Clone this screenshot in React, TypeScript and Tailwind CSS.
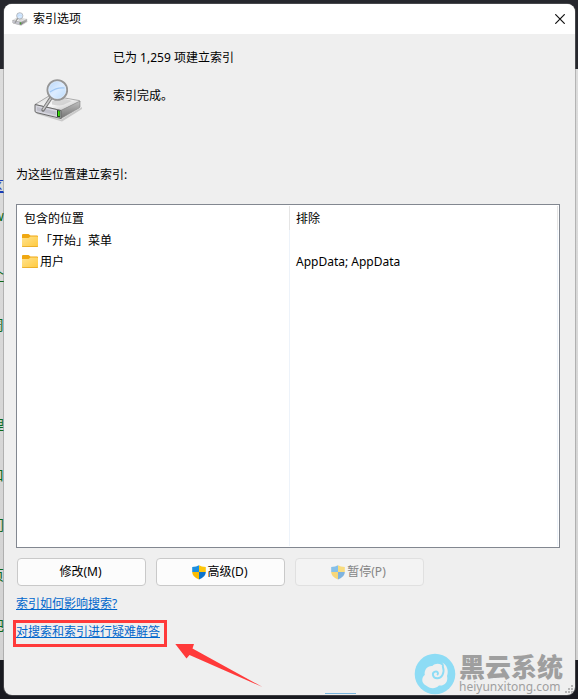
import { clsx } from "clsx";
import type { ReactNode } from "react";

type IndexedLocation = {
  name: string;
  excluded: string;
};

const locations: IndexedLocation[] = [
  { name: "「开始」菜单", excluded: "" },
  { name: "用户", excluded: "AppData; AppData" },
];

// slivers of the document window that sits behind the dialog
const backgroundText = [
  { text: "区", className: "top-[178px] text-blue-800 underline" },
  { text: "w", className: "top-[208px] text-[#0b6b1c]" },
  { text: "个", className: "top-[267px] text-[#0b6b1c] underline" },
  { text: "周", className: "top-[317px] text-[#0b6b1c]" },
  { text: "理", className: "top-[417px] text-[#0b6b1c]" },
  { text: "口", className: "top-[467px] text-[#0b6b1c]" },
  { text: "们", className: "top-[517px] text-[#0b6b1c]" },
  { text: "页", className: "top-[567px] text-[#0b6b1c]" },
  { text: "把", className: "top-[618px] text-[#0b6b1c]" },
];

function DriveSearchIcon({ className }: { className?: string }) {
  return (
    <svg viewBox="8 8 50 44" className={className} aria-hidden="true">
      <defs>
        <linearGradient id="driveTop" x1="0" y1="0" x2="1" y2="1">
          <stop offset="0" stopColor="#d4d4d4" />
          <stop offset="0.5" stopColor="#f8f8f8" />
          <stop offset="1" stopColor="#b5b5b5" />
        </linearGradient>
        <linearGradient id="driveSide" x1="0" y1="0" x2="0" y2="1">
          <stop offset="0" stopColor="#c2c2c2" />
          <stop offset="1" stopColor="#727272" />
        </linearGradient>
        <linearGradient id="lens" x1="0" y1="0" x2="1" y2="1">
          <stop offset="0" stopColor="#b4d4f8" />
          <stop offset="0.5" stopColor="#dcecff" />
          <stop offset="1" stopColor="#b9dbfb" />
        </linearGradient>
      </defs>
      <path d="M11 42 36 49.500 57 37v2L37 51.500 12 44z" fill="#c9c9c9" />
      <path d="M10 34.500 23 26.500q2-1 4-.7l27 4.700q2 .6 0 1.800L36 40.500z" fill="url(#driveTop)" stroke="#8c8c8c" strokeWidth="0.7" />
      <path d="M27 31.500q9-5 20-.5l-9 4q-4 1-11-.5z" fill="#c8c8c8" opacity="0.700" />
      <path d="M36 40.500 55 31v5.500q0 1-1 1.600L36 48.500z" fill="url(#driveSide)" stroke="#838383" strokeWidth="0.6" />
      <path d="m10 34.500 26 6v8L11 42.500q-1-.5-1-1.500z" fill="#d6d6de" stroke="#686868" strokeWidth="1" />
      <path d="m12 37 19 4.500v3.700L12 40.500z" fill="#c0c0cb" />
      <path d="m32 40 3.200.7v6.800l-3.200-.7z" fill="#173c17" />
      <path d="m33 41 1.700.3v5l-1.700-.3z" fill="#3ee40d" />
      <path d="m26.500 27-8.500 13" stroke="#777" strokeWidth="3.400" strokeLinecap="round" />
      <path d="m26.300 27.500-8.200 12" stroke="#c9c9c9" strokeWidth="1.500" strokeLinecap="round" />
      <circle cx="32.300" cy="20" r="9.800" fill="url(#lens)" stroke="#969696" strokeWidth="2" />
      <circle cx="32.300" cy="20" r="8.600" fill="none" stroke="#e7f2ff" strokeWidth="0.6" />
      <path d="M25 22q7-5 14.500-4" fill="none" stroke="#9fc7f4" strokeWidth="1.200" />
    </svg>
  );
}

function FolderIcon() {
  return (
    <svg viewBox="0 0 16 14" className="h-[14px] w-4 shrink-0" aria-hidden="true">
      <defs>
        <linearGradient id="folder" x1="0" y1="0" x2="1" y2="1">
          <stop offset="0" stopColor="#ffe38f" />
          <stop offset="1" stopColor="#ffc93c" />
        </linearGradient>
      </defs>
      <path d="M0 1Q0 0 1 0h5.500L8.500 1.500H15q1 0 1 1v6H0z" fill="#f0a811" />
      <path d="M0 4h6.500l2-1.500H15q1 0 1 1V12q0 1-1 1H1q-1 0-1-1z" fill="url(#folder)" />
      <path d="M0 11.800Q0 13 1 13h14q1 0 1-1.200l-1 .4H1z" fill="#e5a51f" />
    </svg>
  );
}

function ShieldIcon({ disabled }: { disabled?: boolean }) {
  return (
    <svg
      viewBox="0 0 14 15"
      className={clsx("h-[15px] w-[14px]", disabled && "opacity-50")}
      aria-hidden="true"
    >
      <path d="M7 .3Q4.500 2 .2 2v5H7z" fill="#1c8fe0" />
      <path d="M7 .3Q9.500 2 13.800 2v5H7z" fill="#fdc60c" />
      <path d="M.2 7Q.2 12 7 14.500V7z" fill="#fbbc04" />
      <path d="M13.800 7q0 5-6.800 7.500V7z" fill="#0d74cc" />
    </svg>
  );
}

function DialogButton(props: {
  children: ReactNode;
  shield?: boolean;
  disabled?: boolean;
}) {
  return (
    <button
      type="button"
      disabled={props.disabled}
      className={clsx(
        "flex h-7 w-[129px] items-center justify-center gap-0.5 rounded border pr-0.5",
        props.disabled
          ? "border-[#e0e0e0] bg-[#f3f3f3] text-[#858585]"
          : "border-[#c9c9c9] bg-[#fcfcfc]",
      )}
    >
      {props.shield ? <ShieldIcon disabled={props.disabled} /> : null}
      {props.children}
    </button>
  );
}

function LocationTable() {
  return (
    <div className="mr-[15px] ml-3 min-h-0 flex-1 border border-[#828790] bg-white p-px">
      <table className="h-full w-full table-fixed border-separate border-spacing-0 text-left">
        <thead>
          <tr className="h-6">
            <th className="w-[272px] border-r border-[#e5e5e5] p-0 pt-0.5 pl-1.5 font-normal">
              包含的位置
            </th>
            <th className="border-r border-[#e5e5e5] p-0 pt-0.5 pl-1.5 font-normal">
              排除
            </th>
          </tr>
        </thead>
        <tbody>
          {locations.map((location) => (
            <tr key={location.name} className="h-[21px]">
              <td className="border-r border-[#edf3fa] p-0 pl-1">
                <span className="flex items-center gap-0.5">
                  <FolderIcon />
                  {location.name}
                </span>
              </td>
              <td className="border-r border-[#edf3fa] p-0 pl-1.5">
                {location.excluded}
              </td>
            </tr>
          ))}
          {/* keeps the column lines running to the bottom */}
          <tr aria-hidden="true">
            <td className="border-r border-[#edf3fa] p-0" />
            <td className="border-r border-[#edf3fa] p-0" />
          </tr>
        </tbody>
      </table>
    </div>
  );
}

function Watermark() {
  return (
    <div className="pointer-events-none absolute right-3 bottom-0 flex items-center gap-[3px] text-[#9f9f9f]">
      <svg viewBox="0 0 42 42" className="size-[42px]" aria-hidden="true">
        <circle cx="21" cy="21" r="20.300" fill="#8ddcf5" />
        <path
          d="M12 32.500c-4.500-2-5-8-1.200-10.500-1-5.500 3-9.500 7.500-9 3-3.300 9.200-3 10.700 1 1.500-1 1-3-1-4.500 5 2 7 8.500 5 13.500 1.500 6-2.500 10.300-8 9.500-4 4-9.500 3-13 0z"
          fill="#efefef"
        />
        <path
          d="M28.800 13.500c2.200 6-.8 12-5.800 11.800-4.500-.3-5.500-5.500-2-6.600 2.200-.6 3.800 1 2.600 2.800"
          fill="none"
          stroke="#8ddcf5"
          strokeWidth="1.900"
          strokeLinecap="round"
        />
      </svg>
      <div>
        <p className="text-[26px] leading-[26px] font-black">黑云系统</p>
        <p className="text-xs leading-[14px]">heiyunxitong.com</p>
      </div>
    </div>
  );
}

export default function App() {
  return (
    <div className="relative flex h-screen min-h-[480px] flex-col overflow-hidden bg-[linear-gradient(to_bottom,#26272d_69px,#dcdcdc_69px,#d3d3d3_calc(100%-39px),#191a20_calc(100%-39px))] py-1 pr-[3px] pl-1 font-['Noto_Sans','Noto_Sans_CJK_SC',sans-serif] text-xs leading-4 text-black">
      {backgroundText.map((item) => (
        <span
          key={item.text}
          aria-hidden="true"
          className={clsx(
            "absolute left-0 flex w-1 justify-end overflow-hidden text-sm leading-4",
            item.className,
          )}
        >
          {item.text}
        </span>
      ))}

      <main className="relative flex min-h-0 flex-1 flex-col overflow-hidden rounded-lg bg-[#efefef] shadow-[0_0_0_1px_#77777766]">
        <header className="flex h-[30px] shrink-0 items-center bg-white pr-[9px] pl-2">
          <DriveSearchIcon className="h-[14px] w-4" />
          <h1 className="ml-[5px] flex-1">索引选项</h1>
          <button type="button" aria-label="关闭" className="p-px">
            <svg viewBox="0 0 10 10" className="size-2.5" aria-hidden="true">
              <path d="m.3.3 9.400 9.400M9.700.3.3 9.700" stroke="#111" strokeWidth="1.200" />
            </svg>
          </button>
        </header>

        <section className="flex shrink-0 px-[29px] pt-4">
          <DriveSearchIcon className="mt-7 h-11 w-[50px]" />
          <div className="ml-[30px] grid content-start gap-[22px]">
            <p>已为 1,259 项建立索引</p>
            <p>索引完成。</p>
          </div>
        </section>

        <h2 className="mt-[45px] mb-[21px] shrink-0 px-3">为这些位置建立索引:</h2>
        <LocationTable />

        <div className="mt-2.5 flex shrink-0 gap-2.5 px-[13px]">
          <DialogButton>修改(M)</DialogButton>
          <DialogButton shield>高级(D)</DialogButton>
          <DialogButton shield disabled>
            暂停(P)
          </DialogButton>
        </div>

        <div className="mt-2.5 flex shrink-0 flex-col items-start px-[9px] pb-12 text-[#0066cc]">
          <a href="#how-indexing-works" className="ml-[3px] underline">
            索引如何影响搜索?
          </a>
          <a
            href="#troubleshoot"
            className="mt-2 h-[27px] border-3 border-[#ff3a3a] pr-1 leading-[18px] underline"
          >
            对搜索和索引进行疑难解答
          </a>
        </div>

        <svg
          viewBox="0 0 88 43"
          className="pointer-events-none absolute bottom-2 left-[171px] h-[43px] w-[88px]"
          aria-hidden="true"
        >
          <path d="M.3 0H19l-1.500 4.500L87.500 43 14.500 11l-3 3.500z" fill="#ff3a3a" />
        </svg>

        <span className="absolute bottom-px left-[321px] h-px w-[31px] bg-[#79b4dd]" />
        <Watermark />
        <svg
          viewBox="0 0 8 8"
          className="absolute right-0.5 bottom-0.5 size-2"
          fill="#b5b5b5"
          aria-hidden="true"
        >
          <path d="M6 0h2v2H6zM3 3h2v2H3zM6 3h2v2H6zM0 6h2v2H0zM3 6h2v2H3zM6 6h2v2H6z" />
        </svg>
      </main>
    </div>
  );
}
